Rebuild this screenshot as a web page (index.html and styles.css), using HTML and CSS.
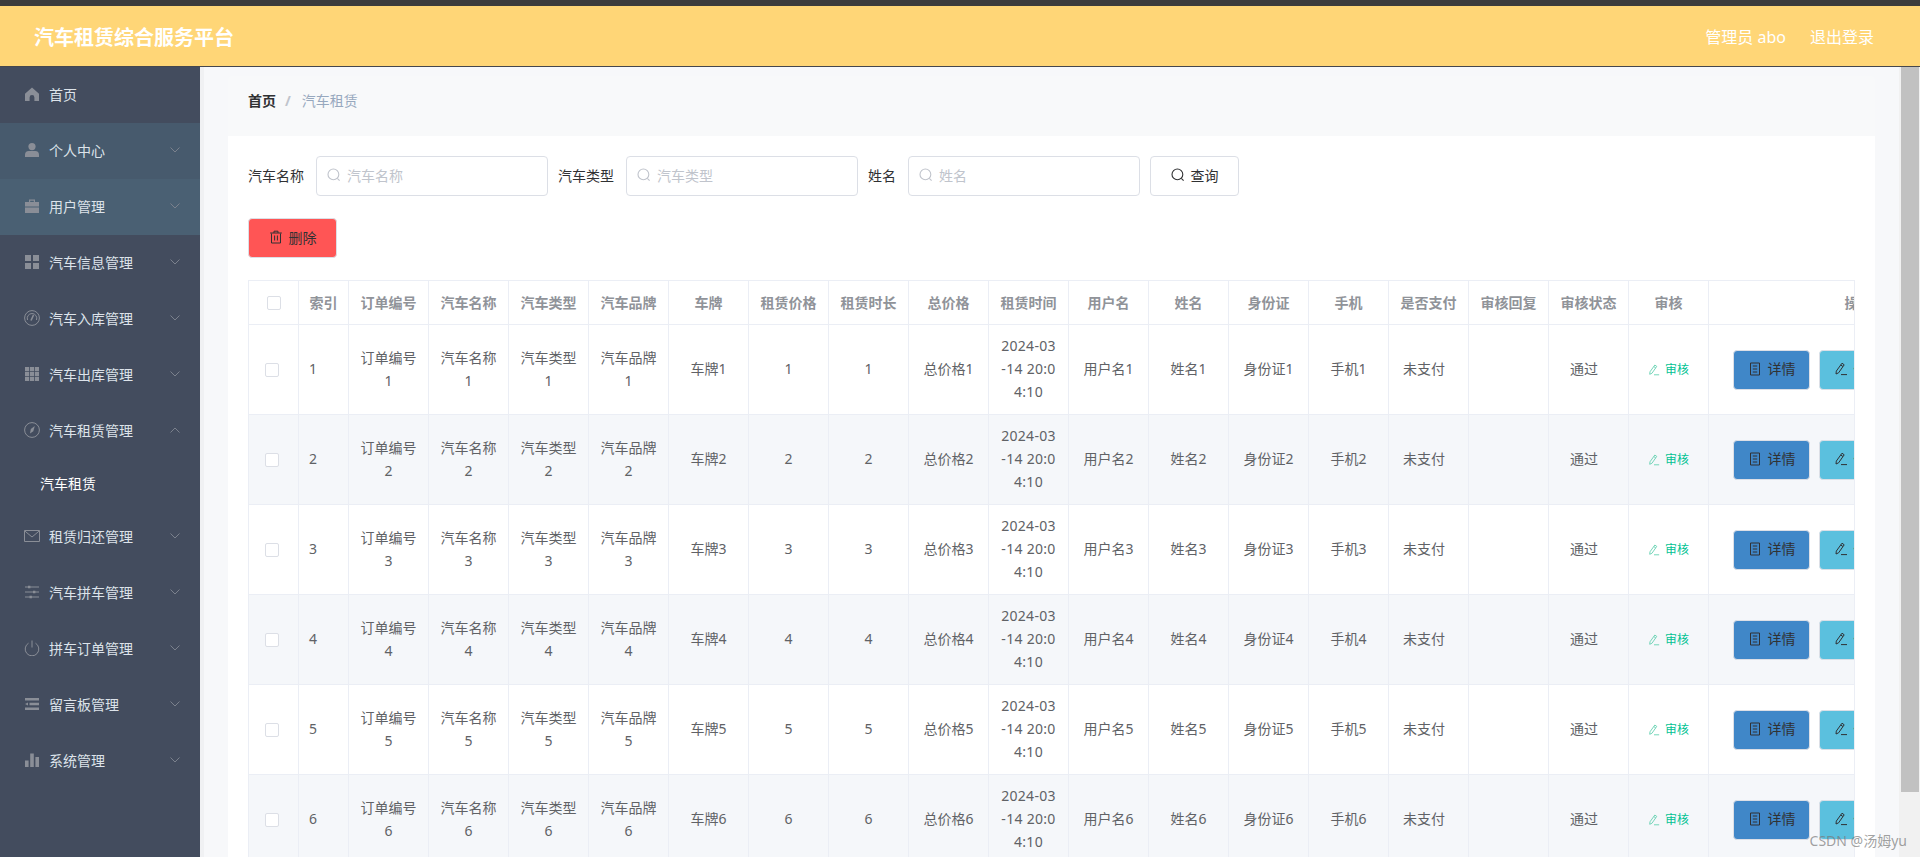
FILE: index.html
```html
<!DOCTYPE html>
<html lang="zh-CN">
<head>
<meta charset="utf-8">
<title>汽车租赁综合服务平台</title>
<link rel="stylesheet" href="styles.css">
</head>
<body>
<svg class="defs" width="0" height="0" aria-hidden="true">
  <symbol id="i-search" viewBox="0 0 14 14"><circle cx="6.4" cy="6.4" r="5.4" fill="none" stroke="currentColor" stroke-width="1.1"/><path d="M10.3 10.3 12.6 12.6" fill="none" stroke="currentColor" stroke-width="1.1"/></symbol>
  <symbol id="i-trash" viewBox="0 0 14 14"><path d="M2.5 3.5V13h9V3.5M1.2 3h11.6M5 3V1.2h4V3M5.6 5.5v5M8.4 5.5v5" fill="none" stroke="currentColor" stroke-width="1"/></symbol>
  <symbol id="i-doc" viewBox="0 0 14 14"><path d="M2.5 1h9v12h-9zM4.8 4h4.4M4.8 7h4.4M4.8 10h4.4" fill="none" stroke="currentColor" stroke-width="1"/></symbol>
  <symbol id="i-pen" viewBox="0 0 14 14"><path d="M8 1.2 10.2 2.800 4.600 10.800 2 12 2.300 9.100ZM6.800 3 9 4.600M7 12.600h6" fill="none" stroke="currentColor" stroke-width="1"/></symbol>
  <symbol id="i-down" viewBox="0 0 10 6"><path d="M.5.5 5 5 9.500.5" fill="none" stroke="currentColor" stroke-width="1"/></symbol>
  <symbol id="i-up" viewBox="0 0 10 6"><path d="M.5 5.500 5 1l4.500 4.500" fill="none" stroke="currentColor" stroke-width="1"/></symbol>
  <symbol id="i-home" viewBox="0 0 16 16"><path d="M8 1.500 1 7.800V15h4.600v-3.600a2.400 2.400 0 0 1 4.800 0V15H15V7.800Z" fill="currentColor"/></symbol>
  <symbol id="i-user" viewBox="0 0 16 16"><circle cx="8" cy="4.600" r="3.600" fill="currentColor"/><path d="M1 15v-2.200A3.800 3.800 0 0 1 4.800 9h6.400a3.800 3.800 0 0 1 3.800 3.800V15Z" fill="currentColor"/></symbol>
  <symbol id="i-case" viewBox="0 0 16 16"><path d="M5 4V1.500h6V4M1 4h14v4.400H1ZM1 9.600h14V15H1Z" fill="currentColor"/><path d="M6.200 2.700h3.600V4H6.200Z" fill="#4a6073"/></symbol>
  <symbol id="i-grid" viewBox="0 0 16 16"><path d="M1 1h6v6H1ZM9 1h6v6H9ZM1 9h6v6H1ZM9 9h6v6H9Z" fill="currentColor"/></symbol>
  <symbol id="i-gauge" viewBox="0 0 16 16"><circle cx="8" cy="8" r="7.400" fill="none" stroke="currentColor"/><path d="M3.500 10A4.800 4.800 0 1 1 12.500 10" fill="none" stroke="currentColor"/><path d="M9.500 5 7 10.500" stroke="currentColor" stroke-width="1.600"/></symbol>
  <symbol id="i-nine" viewBox="0 0 16 16"><path d="M1 1h4.200v4.200H1ZM6 1h4v4.200H6ZM10.800 1H15v4.200h-4.200ZM1 6h4.200v4H1ZM6 6h4v4H6ZM10.800 6H15v4h-4.200ZM1 10.800h4.200V15H1ZM6 10.800h4V15H6ZM10.800 10.800H15V15h-4.200Z" fill="currentColor"/></symbol>
  <symbol id="i-compass" viewBox="0 0 16 16"><circle cx="8" cy="8" r="7.400" fill="none" stroke="currentColor"/><path d="M10.800 4 9.300 9.300 6 11.500 6.800 7Z" fill="currentColor"/></symbol>
  <symbol id="i-mail" viewBox="0 0 16 16"><path d="M.5 2.500h15v11H.5ZM.8 3 8 9l7.200-6" fill="none" stroke="currentColor"/></symbol>
  <symbol id="i-sliders" viewBox="0 0 16 16"><path d="M1 3h14M1 8h14M1 13h14" stroke="currentColor"/><path d="M4 1.700h2.400v2.600H4ZM9 6.700h2.400v2.600H9ZM5.500 11.700h2.400v2.600H5.500Z" fill="currentColor"/></symbol>
  <symbol id="i-power" viewBox="0 0 16 16"><path d="M4.500 3.200a6.800 6.800 0 1 0 7 0M8 .5v7" fill="none" stroke="currentColor"/></symbol>
  <symbol id="i-indent" viewBox="0 0 16 16"><path d="M1 2h14v2.400H1ZM5.500 6.800H15v2.400H5.500ZM1 11.600h14V14H1ZM1 8l3-1.600v3.200Z" fill="currentColor"/></symbol>
  <symbol id="i-bars" viewBox="0 0 16 16"><path d="M1 8.500h3.600V15H1ZM6.200 1.500h3.600V15H6.200ZM11.400 5H15v10h-3.600Z" fill="currentColor"/></symbol>
</svg>

<div class="topline"></div>
<header class="header">
  <div class="brand">汽车租赁综合服务平台</div>
  <div class="account"><span>管理员 abo</span><span>退出登录</span></div>
</header>

<div class="shell">
  <nav class="side">
    <a class="item"><svg class="ico"><use href="#i-home"/></svg><span>首页</span></a>
    <a class="item tint-a"><svg class="ico"><use href="#i-user"/></svg><span>个人中心</span><svg class="chev"><use href="#i-down"/></svg></a>
    <a class="item tint-b"><svg class="ico"><use href="#i-case"/></svg><span>用户管理</span><svg class="chev"><use href="#i-down"/></svg></a>
    <a class="item"><svg class="ico"><use href="#i-grid"/></svg><span>汽车信息管理</span><svg class="chev"><use href="#i-down"/></svg></a>
    <a class="item"><svg class="ico"><use href="#i-gauge"/></svg><span>汽车入库管理</span><svg class="chev"><use href="#i-down"/></svg></a>
    <a class="item"><svg class="ico"><use href="#i-nine"/></svg><span>汽车出库管理</span><svg class="chev"><use href="#i-down"/></svg></a>
    <a class="item"><svg class="ico"><use href="#i-compass"/></svg><span>汽车租赁管理</span><svg class="chev"><use href="#i-up"/></svg></a>
    <a class="subitem">汽车租赁</a>
    <a class="item"><svg class="ico"><use href="#i-mail"/></svg><span>租赁归还管理</span><svg class="chev"><use href="#i-down"/></svg></a>
    <a class="item"><svg class="ico"><use href="#i-sliders"/></svg><span>汽车拼车管理</span><svg class="chev"><use href="#i-down"/></svg></a>
    <a class="item"><svg class="ico"><use href="#i-power"/></svg><span>拼车订单管理</span><svg class="chev"><use href="#i-down"/></svg></a>
    <a class="item"><svg class="ico"><use href="#i-indent"/></svg><span>留言板管理</span><svg class="chev"><use href="#i-down"/></svg></a>
    <a class="item"><svg class="ico"><use href="#i-bars"/></svg><span>系统管理</span><svg class="chev"><use href="#i-down"/></svg></a>
  </nav>

  <main class="content">
    <div class="crumbs"><b>首页</b><i>/</i><span>汽车租赁</span></div>
    <section class="card">
      <form class="filters">
        <label class="flabel">汽车名称</label>
        <div class="field"><svg class="sicon"><use href="#i-search"/></svg><span>汽车名称</span></div>
        <label class="flabel">汽车类型</label>
        <div class="field"><svg class="sicon"><use href="#i-search"/></svg><span>汽车类型</span></div>
        <label class="flabel">姓名</label>
        <div class="field"><svg class="sicon"><use href="#i-search"/></svg><span>姓名</span></div>
        <button class="btn btn-plain" type="button"><svg class="bicon"><use href="#i-search"/></svg>查询</button>
      </form>
      <div class="toolbar"><button class="btn btn-danger" type="button"><svg class="bicon"><use href="#i-trash"/></svg>删除</button></div>
      <div class="tablewrap">
        <table class="grid">
          <colgroup>
            <col class="c50"><col class="c50">
            <col class="c80"><col class="c80"><col class="c80"><col class="c80"><col class="c80"><col class="c80"><col class="c80"><col class="c80"><col class="c80"><col class="c80"><col class="c80"><col class="c80"><col class="c80"><col class="c80"><col class="c80"><col class="c80"><col class="c80">
            <col class="c300">
          </colgroup>
          <thead>
            <tr><th class="chk-h"><span class="box"></span></th><th>索引</th><th>订单编号</th><th>汽车名称</th><th>汽车类型</th><th>汽车品牌</th><th>车牌</th><th>租赁价格</th><th>租赁时长</th><th>总价格</th><th>租赁时间</th><th>用户名</th><th>姓名</th><th>身份证</th><th>手机</th><th>是否支付</th><th>审核回复</th><th>审核状态</th><th>审核</th><th>操作</th></tr>
          </thead>
          <tbody>
            <tr><td class="chk"><span class="box"></span></td><td class="idx">1</td><td>订单编号1</td><td>汽车名称1</td><td>汽车类型1</td><td>汽车品牌1</td><td>车牌1</td><td>1</td><td>1</td><td>总价格1</td><td class="when">2024-03-14 20:04:10</td><td>用户名1</td><td>姓名1</td><td>身份证1</td><td>手机1</td><td class="shift">未支付</td><td></td><td class="shift">通过</td><td><a class="audit"><svg class="aicon"><use href="#i-pen"/></svg>审核</a></td><td class="ops"><button class="btn btn-info" type="button"><svg class="bicon"><use href="#i-doc"/></svg>详情</button><button class="btn btn-edit" type="button"><svg class="bicon"><use href="#i-pen"/></svg>修改</button></td></tr>
            <tr><td class="chk"><span class="box"></span></td><td class="idx">2</td><td>订单编号2</td><td>汽车名称2</td><td>汽车类型2</td><td>汽车品牌2</td><td>车牌2</td><td>2</td><td>2</td><td>总价格2</td><td class="when">2024-03-14 20:04:10</td><td>用户名2</td><td>姓名2</td><td>身份证2</td><td>手机2</td><td class="shift">未支付</td><td></td><td class="shift">通过</td><td><a class="audit"><svg class="aicon"><use href="#i-pen"/></svg>审核</a></td><td class="ops"><button class="btn btn-info" type="button"><svg class="bicon"><use href="#i-doc"/></svg>详情</button><button class="btn btn-edit" type="button"><svg class="bicon"><use href="#i-pen"/></svg>修改</button></td></tr>
            <tr><td class="chk"><span class="box"></span></td><td class="idx">3</td><td>订单编号3</td><td>汽车名称3</td><td>汽车类型3</td><td>汽车品牌3</td><td>车牌3</td><td>3</td><td>3</td><td>总价格3</td><td class="when">2024-03-14 20:04:10</td><td>用户名3</td><td>姓名3</td><td>身份证3</td><td>手机3</td><td class="shift">未支付</td><td></td><td class="shift">通过</td><td><a class="audit"><svg class="aicon"><use href="#i-pen"/></svg>审核</a></td><td class="ops"><button class="btn btn-info" type="button"><svg class="bicon"><use href="#i-doc"/></svg>详情</button><button class="btn btn-edit" type="button"><svg class="bicon"><use href="#i-pen"/></svg>修改</button></td></tr>
            <tr><td class="chk"><span class="box"></span></td><td class="idx">4</td><td>订单编号4</td><td>汽车名称4</td><td>汽车类型4</td><td>汽车品牌4</td><td>车牌4</td><td>4</td><td>4</td><td>总价格4</td><td class="when">2024-03-14 20:04:10</td><td>用户名4</td><td>姓名4</td><td>身份证4</td><td>手机4</td><td class="shift">未支付</td><td></td><td class="shift">通过</td><td><a class="audit"><svg class="aicon"><use href="#i-pen"/></svg>审核</a></td><td class="ops"><button class="btn btn-info" type="button"><svg class="bicon"><use href="#i-doc"/></svg>详情</button><button class="btn btn-edit" type="button"><svg class="bicon"><use href="#i-pen"/></svg>修改</button></td></tr>
            <tr><td class="chk"><span class="box"></span></td><td class="idx">5</td><td>订单编号5</td><td>汽车名称5</td><td>汽车类型5</td><td>汽车品牌5</td><td>车牌5</td><td>5</td><td>5</td><td>总价格5</td><td class="when">2024-03-14 20:04:10</td><td>用户名5</td><td>姓名5</td><td>身份证5</td><td>手机5</td><td class="shift">未支付</td><td></td><td class="shift">通过</td><td><a class="audit"><svg class="aicon"><use href="#i-pen"/></svg>审核</a></td><td class="ops"><button class="btn btn-info" type="button"><svg class="bicon"><use href="#i-doc"/></svg>详情</button><button class="btn btn-edit" type="button"><svg class="bicon"><use href="#i-pen"/></svg>修改</button></td></tr>
            <tr><td class="chk"><span class="box"></span></td><td class="idx">6</td><td>订单编号6</td><td>汽车名称6</td><td>汽车类型6</td><td>汽车品牌6</td><td>车牌6</td><td>6</td><td>6</td><td>总价格6</td><td class="when">2024-03-14 20:04:10</td><td>用户名6</td><td>姓名6</td><td>身份证6</td><td>手机6</td><td class="shift">未支付</td><td></td><td class="shift">通过</td><td><a class="audit"><svg class="aicon"><use href="#i-pen"/></svg>审核</a></td><td class="ops"><button class="btn btn-info" type="button"><svg class="bicon"><use href="#i-doc"/></svg>详情</button><button class="btn btn-edit" type="button"><svg class="bicon"><use href="#i-pen"/></svg>修改</button></td></tr>
          </tbody>
        </table>
      </div>
    </section>
  </main>

  <div class="scrollbar"><div class="thumb"></div></div>
</div>
<div class="watermark">CSDN @汤姆yu</div>
</body>
</html>
```

FILE: styles.css
```css
* { box-sizing: border-box; }
html, body { margin: 0; height: 857px; overflow: hidden; }
body {
  display: flex;
  flex-direction: column;
  position: relative;
  font-family: "Noto Sans", "Noto Sans CJK SC", sans-serif;
  font-size: 14px;
  color: #606266;
  background: #f5f7fa;
}
.defs { position: absolute; }
.topline { height: 6px; background: #3c3c3c; flex: none; }

.header {
  flex: none;
  height: 61px;
  display: flex;
  align-items: center;
  justify-content: space-between;
  padding: 0 46px 0 34px;
  background: #ffd677;
  border-bottom: 1px solid #45474d;
  color: #fff;
}
.brand { font-size: 20px; font-weight: 700; }
.account { display: flex; gap: 24px; font-size: 16px; margin-top: -1px; }

.shell { flex: 1; min-height: 0; display: flex; }

.side { flex: none; width: 200px; background: #434c5e; color: #dde3ea; }
.item {
  display: flex;
  align-items: center;
  height: 56px;
  padding: 0 20px 2px 24px;
}
.tint-a { background: #475a6d; }
.tint-b { background: #4a6073; }
.ico { width: 16px; height: 16px; margin-right: 9px; color: #8a8e97; flex: none; }
.chev { width: 10px; height: 6px; margin-left: auto; margin-bottom: 1px; color: #7b818d; flex: none; }
.subitem {
  display: flex;
  align-items: center;
  height: 50px;
  padding: 0 0 2px 40px;
  color: #fff;
}

.content {
  flex: 1;
  min-width: 0;
  padding: 9px 24px 0;
  border-left: 4px solid #f0f1f3;
  background: #f7f8fa;
}
.crumbs {
  height: 60px;
  display: flex;
  align-items: center;
  padding: 0 0 12px 20px;
  background: #f8f9fa;
  border-radius: 4px 4px 0 0;
  color: #97a8be;
}
.crumbs b { color: #303133; font-weight: 700; }
.crumbs i { font-style: normal; margin: 0 11px 0 9px; color: #c0c4cc; font-weight: 700; }

.card { background: #fff; padding: 20px; height: 800px; }
.filters { display: flex; align-items: center; height: 40px; }
.flabel { color: #303133; margin-right: 12px; padding-bottom: 2px; white-space: nowrap; }
.field {
  width: 232px;
  height: 40px;
  margin-right: 10px;
  display: flex;
  align-items: center;
  padding: 0 0 2px 10px;
  border: 1px solid #dcdfe6;
  border-radius: 4px;
  color: #c0c4cc;
}
.sicon { width: 14px; height: 14px; margin-right: 6px; flex: none; }

.btn {
  display: inline-flex;
  align-items: center;
  justify-content: center;
  height: 40px;
  padding: 0 0 2px;
  border: 1px solid #dcdfe6;
  border-radius: 4px;
  font: inherit;
  color: #303133;
  background: #fff;
}
.bicon { width: 14px; height: 14px; margin-right: 6px; flex: none; }
.btn-plain { width: 89px; }
.btn-danger { width: 89px; background: #ff5555; }
.btn-info { width: 77px; background: #4087c8; }
.btn-edit { width: 77px; margin-left: 9px; background: #5bc0de; }

.toolbar { margin: 22px 0; height: 40px; }

.tablewrap {
  width: 1607px;
  overflow: hidden;
  border: 1px solid #ebeef5;
  border-width: 1px 1px 0;
}
.grid { table-layout: fixed; width: 1760px; border-collapse: separate; border-spacing: 0; }
.c50 { width: 50px; }
.c80 { width: 80px; }
.c300 { width: 300px; }
.grid th, .grid td {
  padding: 0 10px;
  border-right: 1px solid #ebeef5;
  border-bottom: 1px solid #ebeef5;
  text-align: center;
  vertical-align: middle;
  line-height: 23px;
  word-break: break-all;
}
.grid th { height: 44px; color: #909399; font-weight: 700; white-space: nowrap; }
.grid td { height: 90px; padding-bottom: 2px; }
.grid tbody tr:nth-child(even) td { background: #f5f7fa; }
.grid .idx { text-align: left; }
.grid .when { letter-spacing: .3px; }
.grid .shift { padding-right: 19px; }
.grid .ops { text-align: left; padding: 0 0 0 24px; white-space: nowrap; }
.grid .chk-h { padding: 0 0 0 18px; text-align: left; }
.grid .chk { padding: 0 0 0 16px; text-align: left; }
.box {
  display: block;
  width: 14px;
  height: 14px;
  border: 1px solid #dcdfe6;
  border-radius: 2px;
  background: #fff;
}
.audit {
  display: flex;
  justify-content: center;
  align-items: center;
  margin-top: 2px;
  font-size: 12px;
  color: #00c292;
}
.aicon { width: 12px; height: 12px; margin-right: 5px; color: #5fcfae; flex: none; }

.scrollbar {
  flex: none;
  width: 21px;
  padding: 0 1px 0 2px;
  background: #f1f1f1;
}
.thumb { height: 725px; background: #c1c1c1; }

.watermark {
  position: absolute;
  right: 13px;
  bottom: 7px;
  font-size: 14px;
  line-height: 18px;
  color: rgba(120, 120, 120, .7);
}
```
